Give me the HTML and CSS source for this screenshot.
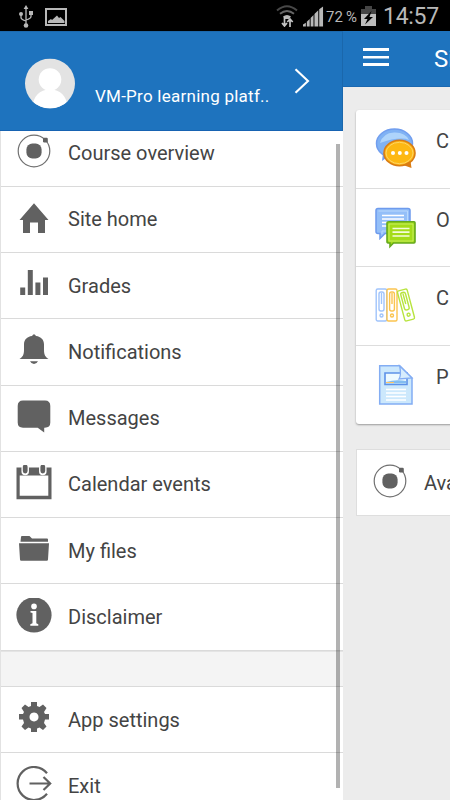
FILE: index.html
```html
<!DOCTYPE html>
<html lang="en">
<head>
<meta charset="utf-8">
<title>VM-Pro learning platform</title>
<link rel="stylesheet" href="styles.css">
</head>
<body>
<svg width="0" height="0" class="defs">
  <symbol id="orbit" viewBox="0 0 36 36"><circle cx="18" cy="18" r="15.800" fill="none" stroke="#707070" stroke-width="1.200"/><rect x="10.400" y="10.400" width="15.200" height="15.200" rx="6" fill="#616161"/><rect x="27" y="4.800" width="4.800" height="4.600" rx="1.200" fill="#616161"/></symbol>
</svg>
<header class="status">
  <svg class="usb" viewBox="0 0 16 24"><g fill="none" stroke="#b8b8b8" stroke-width="1.300"><path d="M8 3v18M3 9v3.500q0 2 5 3.500M13 8v3.500q0 2-5 3.500"/></g><g fill="#b8b8b8"><path d="M8 0l2.400 4H5.600z"/><circle cx="3" cy="9" r="2"/><path d="M11 6h4v4h-4z"/><circle cx="8" cy="20.500" r="2.300"/></g></svg>
  <svg class="photo" viewBox="0 0 22 18"><path d="M1 1h20v16H1z" fill="none" stroke="#b8b8b8" stroke-width="2"/><path d="M3 15v-2l3-2 1 1 5-4.500 2 2.500 1.500-1 4 4v2z" fill="#b8b8b8"/></svg>
  <svg class="wifi" viewBox="0 0 22 22"><g fill="none" stroke-width="2"><path d="M1 5.500Q11-3 21 5.500" stroke="#484848"/><path d="M4 8.800q7-5.500 14 0" stroke="#666"/></g><path d="M7 11.500q4-3 8 0L13 14H9z" fill="#b8b8b8"/><path d="M8.500 12v9m-2.500-3 2.500 3 2.500-3M14 22v-8m-2.700 3 2.700-3 2.700 3" stroke="#c4c4c4" stroke-width="1.700" fill="none"/></svg>
  <svg class="signal" viewBox="0 0 22 21"><path d="M0 21v-2l3-2v4zM4 21v-5l3-3v8zM8 21v-9l3-3v12zM12 21V8l4-4v17zM17 21V3l4-3v21z" fill="#b8b8b8"/></svg>
  <span class="pct">72&thinsp;%</span>
  <svg class="battery" viewBox="0 0 15 21"><path d="M0 3h4V0h7v3h4v5H0z" fill="#454545"/><path d="M0 8h15v12H0z" fill="#bcbcbc"/><path d="M10.500 5 3 13h3.500L4 18.500 12 11H8.500z" fill="#000"/></svg>
  <span class="clock">14:57</span>
</header>
<div class="app">
  <nav class="drawer">
    <div class="profile">
      <svg class="avatar" viewBox="0 0 50 50"><clipPath id="round"><circle cx="25" cy="25" r="25"/></clipPath><g clip-path="url(#round)"><path d="M0 0h50v50H0z" fill="#e3e3e3"/><circle cx="25" cy="21" r="11.300" fill="#fff"/><path d="M7 50Q9 31 25 31T43 50z" fill="#fff"/></g></svg>
      <span class="site">VM-Pro learning platf..</span>
      <svg class="chevron" viewBox="0 0 16 26"><path d="M1.500 1.200 14 13 1.500 24.800" fill="none" stroke="#fff" stroke-width="2.100"/></svg>
    </div>
    <div class="menu">
      <ul>
        <li><svg viewBox="0 0 36 36"><use href="#orbit"/></svg><span>Course overview</span></li>
        <li><svg viewBox="0 0 36 36"><path d="M18 3.300 32.500 20H29v13h-7V22.500h-8V33H7V20H3.500z"/></svg><span>Site home</span></li>
        <li><svg viewBox="0 0 36 36"><path d="M4.200 21.500h5V29h-5zM11.800 4h5v25h-5zM19.400 16.500h5V29h-5zM27 11.500h5V29h-5z"/></svg><span>Grades</span></li>
        <li><svg viewBox="0 0 36 36"><path d="M3.500 27c3-2 4.500-4 4.500-9v-5.500c0-5 3-8 8-8.600Q18 .5 20 3.900c5 .6 8 3.600 8 8.600V18c0 5 1.500 7 4.500 9zM14 29.200h8q-1.500 2.800-4 2.800t-4-2.800z"/></svg><span>Notifications</span></li>
        <li><svg viewBox="0 0 36 36"><path d="M7 1.500h22q5.300 0 5.300 5.500v16.500q0 5.200-5.500 5.200h-.6v4.800l-6.500-4.800H7q-5.300 0-5.300-5.200V7Q1.700 1.500 7 1.500z"/></svg><span>Messages</span></li>
        <li><svg viewBox="0 0 36 36"><path fill-rule="evenodd" d="M.5 2.500h35v31.700H.5zM3.700 10.500v20.300h28.600V10.500z"/><path d="M9.200 3v3.500M26.800 3v3.500" stroke="#fff" stroke-width="7.500" stroke-linecap="round"/><path d="M9.200 2v4M26.800 2v4" stroke="#616161" stroke-width="4.800" stroke-linecap="round"/></svg><span>Calendar events</span></li>
        <li><svg viewBox="0 0 36 36"><path d="M5 6q0-1 1-1h7.500l2.500 2.500h15q1 0 1 1v2.300H4.500zM3 12.300h30L32 28.500q0 1.300-1.300 1.300H5.300Q4 29.800 4 28.500z"/></svg><span>My files</span></li>
        <li><svg viewBox="0 0 36 36"><circle cx="18" cy="17" r="17.600"/><circle cx="18" cy="8.400" r="2.800" fill="#fff"/><path d="M14.500 12.900h5.800v12.300l2 1v1.500h-8v-1.500l2.200-1V15.100l-2-.7z" fill="#fff"/></svg><span>Disclaimer</span></li>
        <li class="gap"></li>
        <li><svg viewBox="0 0 36 36"><path fill-rule="evenodd" d="M15 2h6v4l2.500 1L27 4.500 30.500 8 28 12l1 2h4v5.500h-4L28 23l2.500 3.500L27 30l-3.500-2.500-2.500 1V32h-6v-3.500l-2.500-1L9 30l-3.500-3.500L8 23l-1-3.500H3V14h4l1-2-2.500-4L9 4.500 12.500 7l2.500-1zM18 12.400a4.500 4.500 0 1 0 .01 0z"/></svg><span>App settings</span></li>
        <li><svg viewBox="0 0 36 36"><path d="M31 7.200A16.500 16.500 0 1 0 31 27.800M13.500 17.500H34M27.500 11l6.700 6.500-6.700 6.500" fill="none" stroke="#616161" stroke-width="2.200"/></svg><span>Exit</span></li>
      </ul>
      <div class="scrollbar"></div>
    </div>
  </nav>
  <main class="page">
    <div class="topbar"><i class="burger"></i><span>Si</span></div>
    <section class="card">
      <div class="row"><svg viewBox="0 0 42 42"><ellipse cx="19.500" cy="15.500" rx="18" ry="14.500" fill="#80b2f4" stroke="#719eef" stroke-width="1.500"/><path d="m8 25-1 8 7-5z" fill="#719eef"/><path d="M5 15Q8 5 19 4.500T34 12Q25 8 5 15z" fill="#aed4fb"/><ellipse cx="24.500" cy="25" rx="15.500" ry="12.700" fill="#fdb813" stroke="#da7c14" stroke-width="1.600"/><path d="m28 37 8.500 3-1-7z" fill="#da7c14"/><ellipse cx="24.500" cy="25" rx="13.500" ry="10.700" fill="none" stroke="#ffd465"/><g fill="#fff"><circle cx="18" cy="25" r="2"/><circle cx="24.800" cy="25" r="2"/><circle cx="31.500" cy="25" r="2"/></g></svg><span>C</span></div>
      <div class="row"><svg viewBox="0 0 42 42"><path d="M3 1.500h30q2 0 2 2v21q0 2-2 2H10l-5 5v-5H3q-2 0-2-2v-21q0-2 2-2z" fill="#94bff8" stroke="#6e9bed" stroke-width="1.500"/><path d="M3.500 4h29v20H7v3" fill="none" stroke="#b8d8fd"/><path d="M7 8.500h22M7 12h22M7 15.500h22M7 19h10" stroke="#fff" stroke-width="1.600"/><path d="M14 14.800h25q1 0 1 1v19q0 1.200-1 1.200H18.500L15 39.500V36h-1q-2 0-2-1.200v-19q0-1 2-1z" fill="#a4dc18" stroke="#65a91c" stroke-width="1.600"/><path d="M14 17h24v17H14z" fill="none" stroke="#c7ee61"/><path d="M17.500 21.500h17M17.500 25.200h17M17.500 29h17" stroke="#f4fbd9" stroke-width="1.700"/></svg><span>O</span></div>
      <div class="row"><svg viewBox="0 0 42 42"><g fill="#fff" stroke-width="1.400"><g stroke="#a0c4fb"><rect x="1.200" y="4" width="10.500" height="32" rx="1.500"/><rect x="4" y="7" width="5" height="19" rx="2"/><circle cx="6.500" cy="30.500" r="1.500"/><path d="M6.500 8v11"/></g><g stroke="#fbc44f"><rect x="12" y="4" width="10" height="32" rx="1.500"/><rect x="14.600" y="7" width="4.800" height="19" rx="2"/><circle cx="17" cy="30.500" r="1.500"/><path d="M17 8v11"/></g><g stroke="#b8e43f" transform="rotate(-15 31 20)"><rect x="26" y="4.500" width="10" height="31" rx="1.500"/><rect x="28.600" y="7" width="4.800" height="18" rx="2"/><circle cx="31" cy="30" r="1.500"/><path d="M31 8v11"/></g></g></svg><span>C</span></div>
      <div class="row"><svg viewBox="0 0 42 42"><path d="M4.700 1.700h20L37 14v26H4.700z" fill="#cce8fc" stroke="#83adf3" stroke-width="1.500"/><path d="M10 9h22v11.500H10z" fill="#eefaff" stroke="#5d92e8" stroke-width="1.600"/><path d="M11 18q10-3 20-1v2.500H11z" fill="#83bdf0"/><path d="M11 18.500h8" stroke="#ffc567"/><path d="M24.700 2 37 14l-13 1q2.500-4 .7-13z" fill="#d7edfd" stroke="#83adf3" stroke-width="1.300"/><path d="M11 25.500h20M11 29h20M11 32.500h20M11 36h20" stroke="#fff" stroke-width="1.500"/></svg><span>P</span></div>
    </section>
    <section class="course"><svg viewBox="0 0 36 36"><use href="#orbit"/></svg><span>Ava</span></section>
  </main>
</div>
</body>
</html>
```
FILE: styles.css
```css
* { box-sizing: border-box; }
body { margin: 0; width: 450px; height: 800px; overflow: hidden; background: #ececec; font-family: Roboto, sans-serif; color: #444; }
svg { display: block; flex: none; }
.defs { position: absolute; }
.status { display: flex; height: 31px; background: #000; color: #b8b8b8; padding-left: 18px; white-space: nowrap; }
.usb { width: 16px; height: 24px; margin-top: 5px; }
.photo { width: 22px; height: 18px; margin: 8px 0 0 11px; }
.wifi { width: 22px; height: 22px; margin: 5px 0 0 209px; }
.signal { width: 21px; height: 21px; margin: 6px 0 0 5px; }
.pct { width: 35px; margin-left: 2px; font-size: 15px; line-height: 34px; }
.battery { width: 15px; height: 21px; margin-top: 6px; }
.clock { margin-left: 7px; font-size: 23px; line-height: 34px; letter-spacing: -0.3px; }
.app { display: flex; height: 769px; }
.drawer { display: flex; flex-direction: column; width: 343px; flex: none; background: #fff; }
.profile { display: flex; height: 100px; flex: none; padding-left: 25px; background: #1e73be; color: #fff; border-right: 1px solid #1a67ac; border-top: 1px solid #1c69ae; border-bottom: 1px solid #1763b2; }
.avatar { width: 50px; height: 51px; margin-top: 26px; }
.site { width: 219px; padding-left: 20px; margin-top: 53px; font-size: 17px; line-height: 22px; letter-spacing: 0.25px; white-space: nowrap; }
.chevron { width: 16px; height: 26px; margin-top: 36px; }
.menu { position: relative; flex: 1; overflow: hidden; border-left: 1px solid #e2e2e2; }
.menu ul { list-style: none; margin: -10.7px 0 0; padding: 0; }
.menu li { display: flex; align-items: center; height: 66.3px; padding-left: 15px; border-bottom: 1px solid #dadada; font-size: 20px; }
.menu li svg { width: 36px; height: 36px; margin: -3px 16px 0 0; fill: #616161; }
.menu li.gap { height: 36.3px; background: #f4f4f4; border-top: 1px solid #e4e4e4; }
.scrollbar { position: absolute; right: 3px; top: 13px; width: 4px; height: 644px; background: rgba(0, 0, 0, 0.3); }
.page { flex: 1; min-width: 0; overflow: hidden; background: #ececec; }
.topbar { display: flex; align-items: center; height: 56px; padding-left: 20px; background: #1e73be; color: #fff; font-size: 24px; border-bottom: 1px solid #1a68b1; white-space: nowrap; }
.burger { flex: none; width: 26px; height: 18px; margin: -3px 45px 0 0; border-top: 3px solid #fff; border-bottom: 3px solid #fff; background: linear-gradient(#fff, #fff) 0 5px / 26px 2.5px no-repeat; }
.card { margin: 23px 0 0 13px; width: 110px; height: 314px; background: #fff; border-radius: 3px; box-shadow: 0 1px 2px rgba(0, 0, 0, 0.35); }
.row { display: flex; height: 78.7px; padding: 18px 0 0 19px; border-bottom: 1px solid #ddd; font-size: 20px; line-height: 26px; }
.row:last-child { border-bottom: 0; }
.row svg { width: 42px; height: 42px; }
.row span { margin-left: 19px; }
.course { display: flex; align-items: center; margin: 25px 0 0 13px; width: 110px; height: 67px; padding-left: 15px; background: #fff; border: 1px solid #dedede; font-size: 20px; white-space: nowrap; }
.course svg { width: 36px; height: 36px; margin: -4px 16px 0 0; }
```
